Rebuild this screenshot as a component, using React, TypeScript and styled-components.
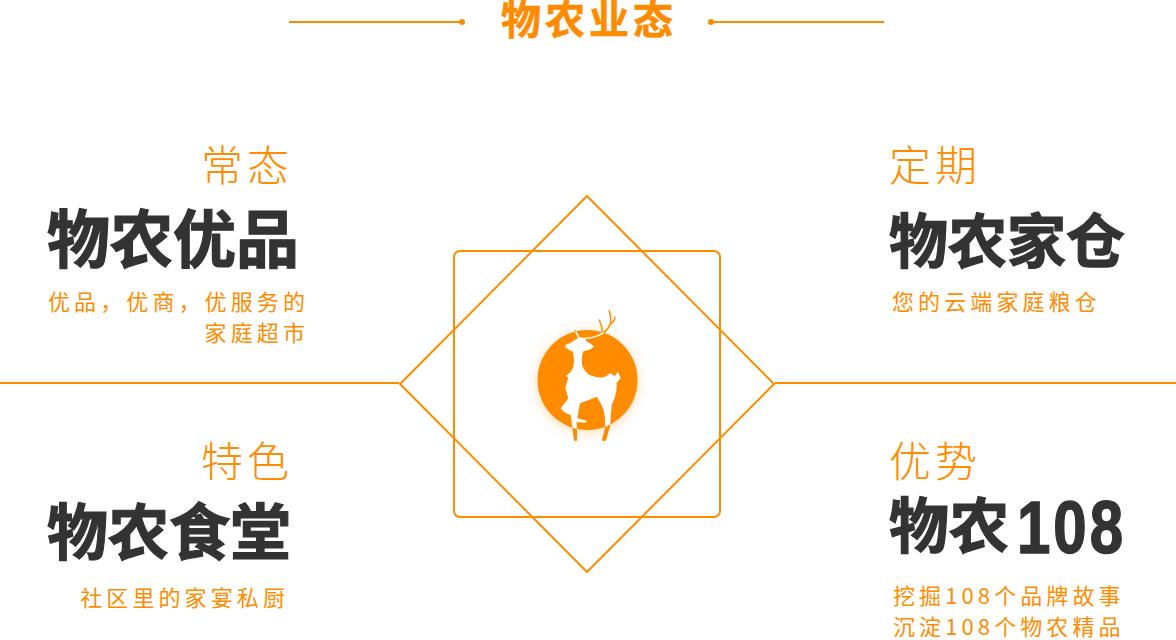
import {createGlobalStyle} from 'styled-components';
import styled from 'styled-components';

const ORANGE = '#ff8c00';

const blocksLeft = [
    {
        tag: '常态',
        name: '物农优品',
        size: 63,
        lines: ['优品，优商，优服务的', '家庭超市'],
        top: 10,
        nameGap: 17,
        subGap: 19,
        subInset: 0,
    },
    {
        tag: '特色',
        name: '物农食堂',
        size: 61,
        lines: ['社区里的家宴私厨'],
        top: 52,
        nameGap: 16,
        subGap: 22,
        subInset: 20,
    },
];

const blocksRight = [
    {
        tag: '定期',
        name: '物农家仓',
        size: 59,
        lines: ['您的云端家庭粮仓'],
        top: 10,
        nameGap: 22,
        subGap: 18,
        subInset: 3,
    },
    {
        tag: '优势',
        name: '物农',
        digits: '108',
        size: 60,
        lines: ['挖掘108个品牌故事', '沉淀108个物农精品'],
        top: 52,
        nameGap: 10,
        subGap: 21,
        subInset: 4,
    },
];

const DEER_BODY =
    'M196 165 Q212 160 225 150 Q234 143 244 142 Q256 146 262 156 Q274 160 282 170 Q272 180 250 184 Q243 200 247 228 Q252 242 264 252 Q284 264 310 262 Q322 258 330 250 L345 258 L354 245 L362 265 L350 278 Q352 312 335 345 L330 410 L328 416 L318 452 L305 452 L316 410 Q316 360 300 336 L290 320 Q262 332 240 340 L232 385 L260 392 L258 398 L230 396 L232 452 L222 452 L218 420 L212 375 Q196 372 182 355 L205 325 L196 295 L205 262 L197 258 Q214 248 218 235 Q226 215 218 185 Q206 180 196 172 Z';

const DEER_ANTLERS = [
    'M240 146 Q272 146 296 136 Q320 128 332 100 Q334 80 328 62',
    'M333 102 Q342 96 345 82',
    'M308 130 Q306 108 298 90',
    'M238 146 L226 122',
];

type Block = (typeof blocksLeft)[number] & {digits?: string};

const InfoBlock = ({block, $right}: {block: Block; $right: boolean}) => (
    <Info $right={$right} $top={block.top}>
        <Tag $right={$right}>{block.tag}</Tag>
        <Name $size={block.size} $gap={block.nameGap}>
            {block.name}
            {block.digits && <Digits>{block.digits}</Digits>}
        </Name>
        <Sub $right={$right} $gap={block.subGap} $inset={block.subInset}>
            {block.lines.map((line) => (
                <div key={line}>{line}</div>
            ))}
        </Sub>
    </Info>
);

const Deer = ({color}: {color: string}) => (
    <g transform="translate(101 95) scale(0.3333)">
        <path d={DEER_BODY} fill={color} />
        {DEER_ANTLERS.map((d) => (
            <path key={d} d={d} stroke={color} strokeWidth="4.5" strokeLinecap="round" />
        ))}
    </g>
);

const Diagram = () => (
    <svg width="376" height="378" viewBox="0 0 376 378" fill="none">
        <defs>
            <clipPath id="disc">
                <circle cx="188.5" cy="185" r="50" />
            </clipPath>
            <filter id="glow" x="-50%" y="-50%" width="200%" height="200%">
                <feGaussianBlur stdDeviation="7" />
            </filter>
        </defs>
        <path d="M188 1 L375 189 L188 377 L1 189 Z" stroke={ORANGE} strokeWidth="2" />
        <rect x="55" y="56" width="266" height="266" rx="6" stroke={ORANGE} strokeWidth="2" />
        <circle cx="188.5" cy="187" r="49" fill={ORANGE} opacity="0.35" filter="url(#glow)" />
        <circle cx="188.5" cy="185" r="50" fill={ORANGE} />
        <Deer color={ORANGE} />
        <g clipPath="url(#disc)">
            <Deer color="#fff" />
        </g>
    </svg>
);

export default function App() {
    return (
        <Page>
            <GlobalStyle />
            <Header>
                <Wing $flip={false} />
                <Title>物农业态</Title>
                <Wing $flip />
            </Header>
            <Stage>
                <Column>
                    <Slot>
                        <InfoBlock block={blocksLeft[0]} $right={false} />
                    </Slot>
                    <Rule />
                    <Slot>
                        <InfoBlock block={blocksLeft[1]} $right={false} />
                    </Slot>
                </Column>
                <Center>
                    <Diagram />
                </Center>
                <Column>
                    <Slot>
                        <InfoBlock block={blocksRight[0]} $right />
                    </Slot>
                    <Rule />
                    <Slot>
                        <InfoBlock block={blocksRight[1]} $right />
                    </Slot>
                </Column>
            </Stage>
        </Page>
    );
}

const GlobalStyle = createGlobalStyle`
    html, body {
        margin: 0;
        padding: 0;
        background: #fff;
    }
    body {
        font-family: 'Noto Sans CJK SC', 'Noto Sans', sans-serif;
    }
`;

const Page = styled.div`
    width: 1176px;
    height: 640px;
    overflow: hidden;
    background: #fff;
`;

const Header = styled.div`
    height: 44px;
    display: flex;
    justify-content: center;
    align-items: center;
    gap: 41px;
    padding-right: 3px;
`;

const Wing = styled.div<{$flip: boolean}>`
    width: 173px;
    height: 2px;
    background: ${ORANGE};
    position: relative;
    &::after {
        content: '';
        position: absolute;
        top: -2px;
        ${({$flip}) => ($flip ? 'left: -3px;' : 'right: -3px;')}
        width: 6px;
        height: 6px;
        border-radius: 50%;
        background: ${ORANGE};
    }
`;

const Title = styled.div`
    width: 167px;
    font-size: 40px;
    line-height: 40px;
    font-weight: 700;
    letter-spacing: 4px;
    color: ${ORANGE};
    -webkit-text-stroke: 0.6px ${ORANGE};
    white-space: nowrap;
    margin: -11px 2px 0 -2px;
`;

const Stage = styled.div`
    display: grid;
    grid-template-columns: 399px 376px 401px;
    margin-top: 86px;
`;

const Column = styled.div`
    display: flex;
    flex-direction: column;
`;

const Slot = styled.div`
    height: 252px;
`;

const Rule = styled.div`
    height: 2px;
    background: ${ORANGE};
`;

const Center = styled.div`
    padding-top: 65px;
    svg {
        display: block;
    }
`;

const Info = styled.div<{$right: boolean; $top: number}>`
    padding-top: ${({$top}) => $top}px;
    ${({$right}) =>
        $right ? 'padding-left: 114px;' : 'padding-left: 47px; width: 258px;'}
`;

const Tag = styled.div<{$right: boolean}>`
    font-size: 42px;
    line-height: 46px;
    height: 46px;
    font-weight: 300;
    letter-spacing: 4px;
    color: ${ORANGE};
    white-space: nowrap;
    ${({$right}) => ($right ? '' : 'text-align: right; padding-right: 12px;')}
`;

const Name = styled.div<{$size: number; $gap: number}>`
    font-size: ${({$size}) => $size}px;
    line-height: ${({$size}) => $size}px;
    margin-top: ${({$gap}) => $gap}px;
    font-weight: 700;
    color: #333;
    -webkit-text-stroke: 1.2px #333;
    white-space: nowrap;
`;

const Digits = styled.span`
    display: inline-block;
    margin-left: 8px;
    letter-spacing: 3px;
    font-family: 'Liberation Sans', sans-serif;
    transform: translateY(5px) scaleY(1.25);
    transform-origin: 50% 84%;
`;

const Sub = styled.div<{$right: boolean; $gap: number; $inset: number}>`
    margin-top: ${({$gap}) => $gap}px;
    font-size: 22px;
    line-height: 31px;
    letter-spacing: 4.1px;
    color: ${ORANGE};
    white-space: nowrap;
    ${({$right, $inset}) =>
        $right
            ? `padding-left: ${$inset}px;`
            : `text-align: right; margin-right: ${$inset - 4}px;`}
`;
